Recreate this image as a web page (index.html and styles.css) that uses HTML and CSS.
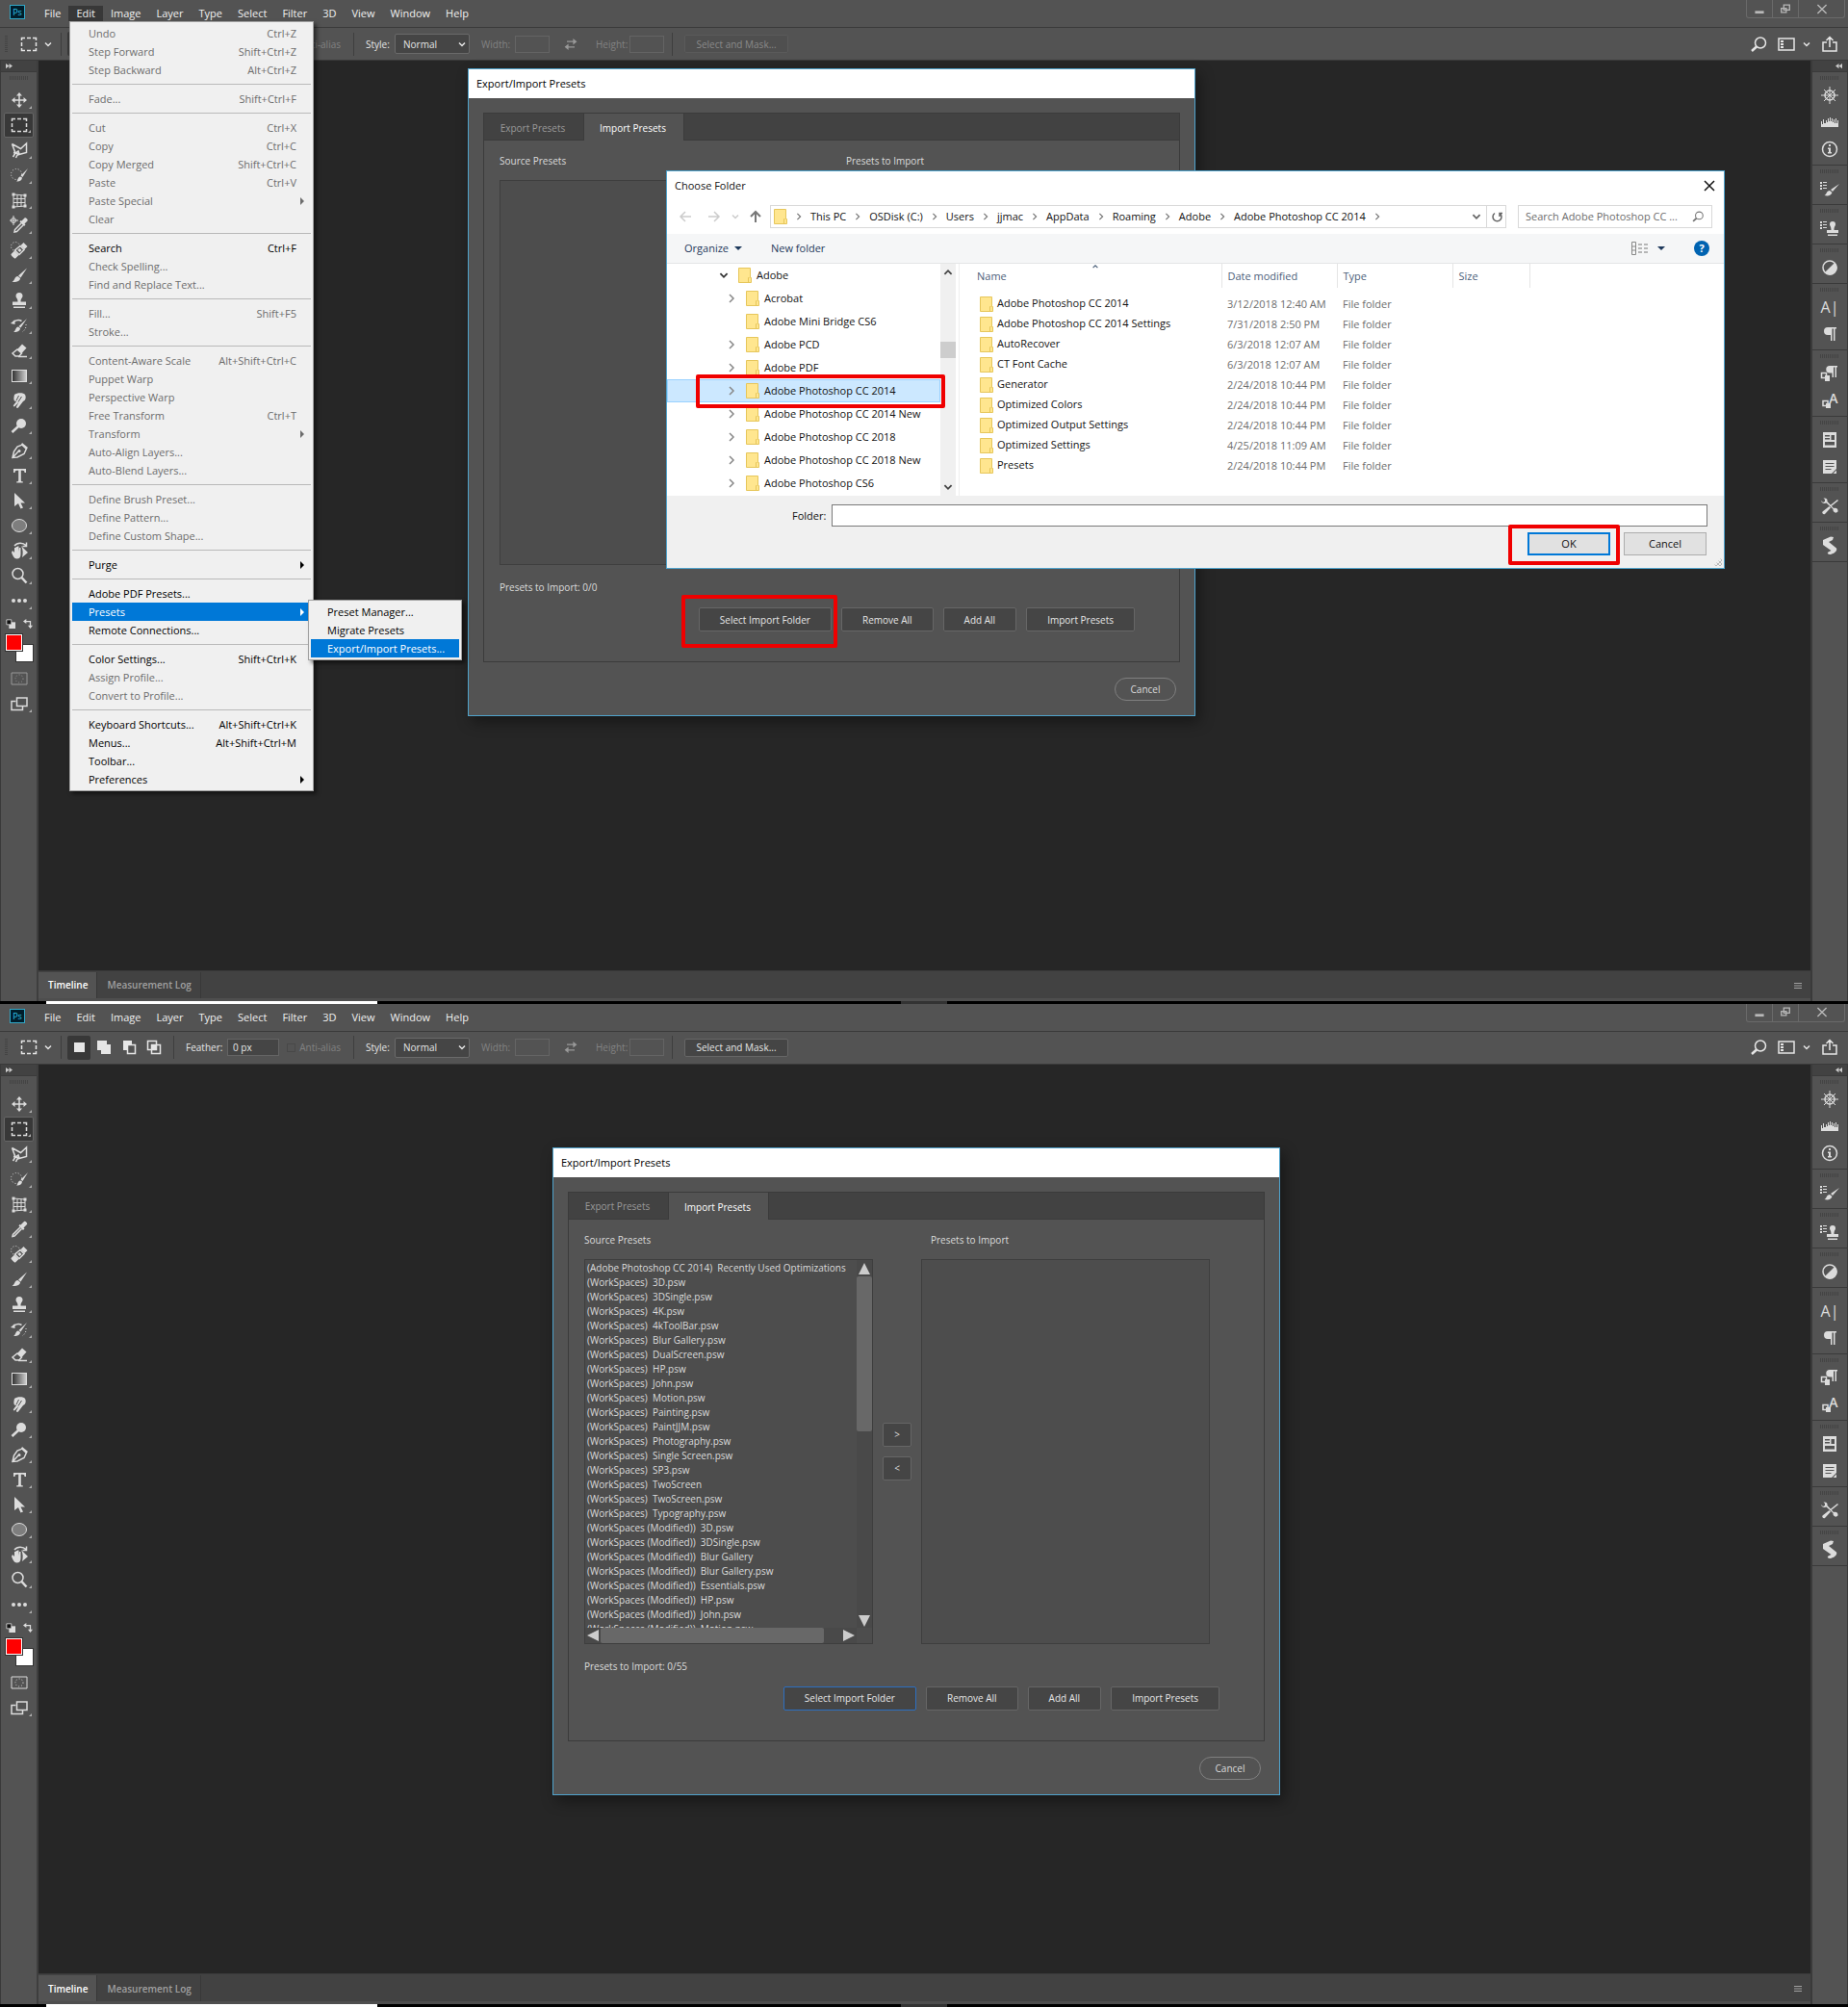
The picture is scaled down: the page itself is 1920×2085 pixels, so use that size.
FILE: index.html
```html
<!DOCTYPE html>
<html lang="en">
<head>
    <meta charset="UTF-8">
    <meta name="viewport" content="width=device-width, initial-scale=1.0">
    <title>Export/Import Presets</title>
    <link rel="stylesheet" href="styles.css">
</head>
<body>
<!-- icons -->
<svg class="sprite" aria-hidden="true">
    <symbol id="move" viewBox="0 0 20 20"><path d="M10 3v14M3 10h14" class="ln"/><path d="M10 2l3 3.500H7zM10 18l3-3.500H7zM2 10l3.500-3v6zM18 10l-3.500-3v6z"/></symbol>
    <symbol id="marquee" viewBox="0 0 20 20"><path d="M2.500 6V3.500H6M8 3.500h4M14 3.500h3.500V6M17.500 8v4M17.500 14v2.500H14M12 16.500H8M6 16.500H2.500V14M2.500 12V8" class="ln"/></symbol>
    <symbol id="lasso" viewBox="0 0 20 20"><path d="M2.500 3.500l9 5L17.500 3v9.500L8 15l-1.500 3M2.500 3.500L6 13l3-2 1 3-6-1.500M6 13l-2.500 4" class="ln"/></symbol>
    <symbol id="quicksel" viewBox="0 0 20 20"><circle cx="7" cy="9" r="5.500" class="ln dots"/><path d="M19 3l-5.500 9-2-1.500zM13 12.500c0 3-3 4.500-6 4 2-1 1.500-5 4-5z"/></symbol>
    <symbol id="crop" viewBox="0 0 20 20"><path d="M4 4l12 1v11L4 17zM8 4.500v12M12 4.500v12M4 8.500h12M4 12.500h12" class="ln thin"/><path d="M2.500 2.500h3v3h-3zM14.500 3.500h3v3h-3zM14.500 14.500h3v3h-3zM2.500 15.500h3v3h-3z"/></symbol>
    <symbol id="eyedrop" viewBox="0 0 20 20"><path d="M11 8l-7.500 7.500-.5 2 2-.5L12.500 9.500" class="ln"/><path d="M9.500 6.500l4.500 4.500 1.500-1.500-1-1 3.500-3.500c1-1-1.500-4-3-3l-3.500 3.500-1-.5z"/></symbol>
    <symbol id="sampler" viewBox="0 0 20 20"><path d="M12 8l-6.500 6.500-.5 2.500 2.500-.5L14 10" class="ln"/><path d="M10.500 6.500l4.500 4.500 1.500-1.500-1-1 3-3c1-1-1.500-4-3-3l-3 3-1-.5z"/><circle cx="4" cy="5" r="2.500" class="ln thin"/><path d="M4 0v10M-1 5h10" class="ln thin"/></symbol>
    <symbol id="heal" viewBox="0 0 20 20"><circle cx="6" cy="6" r="4.500" class="ln dots"/><path d="M14.500 2l4 4-3 3-4-4zM5 10.500l4.500 4.500-3.500 3.500c-1 .5-5-3.500-4.500-4.500z"/><path d="M11 5.500l4 4-5 5-4.500-4.500z" class="ln"/><path d="M10.500 8l2 2-2 2-2-2z"/></symbol>
    <symbol id="brush" viewBox="0 0 20 20"><path d="M18 2.500l-6.500 10-2.500-2zM8.500 11l2.500 2c0 3-4 4.500-8.500 4 3-1.500 2.500-6 6-6z"/></symbol>
    <symbol id="stamp" viewBox="0 0 20 20"><path d="M10 2a3.500 3.500 0 0 1 3.500 3.500c0 2-2 2.500-2 6H17v3.500H3v-3.500h5.500c0-3.500-2-4-2-6A3.500 3.500 0 0 1 10 2zM4 16.500h12V18H4z"/></symbol>
    <symbol id="history" viewBox="0 0 20 20"><path d="M18 3l-6.500 9.500-2-1.500zM9 11.500l2 1.500c0 3-4 4.500-7 4 2.500-1 2-5.500 5-5.500zM1 8l4.500-4v5z"/><path d="M5 6c2-1.500 5-2 7.500-.5" class="ln"/><path d="M17 9c.500 3-1 6-4 8" class="ln dots"/></symbol>
    <symbol id="eraser" viewBox="0 0 20 20"><path d="M13 3.500l4.500 4-5 5.500L8 9z"/><path d="M8 9l4.500 4-2.500 3H6l-3-3z" class="ln"/><path d="M9 16.500h9" class="ln"/></symbol>
    <symbol id="smudge" viewBox="0 0 20 20"><path d="M5 4c3-2.500 10-2 11 0 1.500 3 .500 6-2 7l-5 6.500c-1 1-2.500 0-2-1L9.500 12l-4 4c-1 1-2 0-1.500-1l3.500-4.500C5 11.500 3.500 10 5 4z"/><path d="M9.500 5L7 10M12.500 6L9 11.500" stroke="#535353" fill="none"/></symbol>
    <symbol id="dodge" viewBox="0 0 20 20"><circle cx="12" cy="8" r="5"/><path d="M9 11l-6.500 6" class="ln thick"/></symbol>
    <symbol id="pen" viewBox="0 0 20 20"><path d="M13 4l4.500 4-2.500 5.500-7 3.500L3 17.500 4.500 11 8 6zM3 17.500l6-6.500" class="ln"/><circle cx="10" cy="10.500" r="1.500"/><path d="M13 2l6 5-2 2-5-5z"/></symbol>
    <symbol id="type" viewBox="0 0 20 20"><path d="M4 3h13v4h-1.500c0-1.500-.5-2.200-2-2.200h-1.700V15c0 1 .5 1.300 2 1.300V17.500H7.200v-1.200c1.500 0 2-.3 2-1.300V4.800H7.500c-1.500 0-2 .7-2 2.200H4z"/></symbol>
    <symbol id="select" viewBox="0 0 20 20"><path d="M5 2l11 10.500h-4.500l2.500 5-2.500 1-2.500-5.500L5 16z"/></symbol>
    <symbol id="ellipse" viewBox="0 0 20 20"><ellipse cx="10" cy="10" rx="7.500" ry="6.500" fill="#7e7e7e" stroke="currentColor"/></symbol>
    <symbol id="hand" viewBox="0 0 20 20"><path d="M3 10l2 2V7h1.500v4V6H8v5V5.500h1.500V11l.5-4h1.500v7c0 3-1.500 4.500-4 4.500-3 0-4-3-5.500-6.500zM12 5l7 7-6 5c1-4 1-8-1-12z"/><path d="M5 5c3-4 9-3.500 12-.5M17.500 1.500v4h-4" class="ln"/></symbol>
    <symbol id="zoom" viewBox="0 0 20 20"><circle cx="8.500" cy="8" r="5.500" class="ln"/><path d="M12.500 12l5 5.500" class="ln thick"/></symbol>
    <symbol id="dots" viewBox="0 0 20 20"><circle cx="4" cy="10" r="2"/><circle cx="10" cy="10" r="2"/><circle cx="16" cy="10" r="2"/></symbol>
    <symbol id="defaults" viewBox="0 0 12 12"><path d="M4 4h8v8H4z"/><path d="M1 1h6v6H1z" fill="#111" stroke="currentColor"/></symbol>
    <symbol id="swap" viewBox="0 0 12 12"><path d="M3 3h6v6" class="ln"/><path d="M0 3l4-3v6zM9 12L6 8h6z"/></symbol>
    <symbol id="mask" viewBox="0 0 20 20"><path d="M2 4h16v12H2z" class="ln thin"/><circle cx="10" cy="10" r="4" class="ln dots"/></symbol>
    <symbol id="screens" viewBox="0 0 20 20"><path d="M6.500 7.500H2v9h11.500V13" class="ln"/><path d="M7.500 4H18v8.500H7.500z" class="ln"/></symbol>
    <symbol id="down" viewBox="0 0 10 10"><path d="M2 3.500l3 3 3-3" class="ln"/></symbol>
    <symbol id="m-new" viewBox="0 0 20 20"><path d="M5 5h11v10H5z"/></symbol>
    <symbol id="m-add" viewBox="0 0 20 20"><path d="M3 3h10v4h4v10H7v-4H3z"/></symbol>
    <symbol id="m-sub" viewBox="0 0 20 20"><path d="M4 3h9v4H8v6H4z"/><path d="M8.500 7.500h8v9h-8z" class="ln"/></symbol>
    <symbol id="m-int" viewBox="0 0 20 20"><path d="M3.500 3.500h9v9h-9zM7.500 7.500h9v9h-9z" class="ln"/><path d="M8 8h5v5H8z"/></symbol>
    <symbol id="exchange" viewBox="0 0 20 20"><path d="M5 6.500h10M5 13.500h10" class="ln"/><path d="M13 2.500l5 4-5 4zM7 9.500l-5 4 5 4z"/></symbol>
    <symbol id="search" viewBox="0 0 20 20"><ellipse cx="12" cy="8.500" rx="5.500" ry="5.500" class="ln"/><path d="M8 12.500L3 17" class="ln thick"/></symbol>
    <symbol id="workspace" viewBox="0 0 20 20"><path d="M2 4h16v12H2z" class="ln"/><path d="M4 6h3v2H4zM4 9h3v2H4zM4 12h3v2H4z"/></symbol>
    <symbol id="share" viewBox="0 0 20 20"><path d="M7 8H3v9h14V8h-4M10 13V3M6.500 6L10 2.500 13.500 6" class="ln"/></symbol>
    <symbol id="wheel" viewBox="0 0 20 20"><circle cx="10" cy="10" r="5" class="ln"/><path d="M10 1v18M1 10h18M4 4l12 12M16 4L4 16" class="ln thin"/></symbol>
    <symbol id="histogram" viewBox="0 0 20 20"><path d="M1 15V9h1v3h1V7h1v4h2V8h1v2h1V6h1v3h1V5h1v4h1V6h1v4h1V7h1v4h1V6h1v5h1V8h1v7z"/></symbol>
    <symbol id="info" viewBox="0 0 20 20"><circle cx="10" cy="10" r="7.500" class="ln"/><path d="M9 5h2v2H9zM8 8.500h3V13h1v1.500H8V13h1v-3H8z"/></symbol>
    <symbol id="brushes" viewBox="0 0 20 20"><path d="M0 3h2v2H0zM0 6h2v2H0zM0 9h2v2H0zM3 3h4v1H3zM3 6h4v1H3zM3 9h4v1H3zM20 5l-7 8-2-2zM10 12l2.500 2c-1 3-4 4-8 3 2.500-1 2-5 5.500-5z"/></symbol>
    <symbol id="clone" viewBox="0 0 20 20"><path d="M0 3h2v2H0zM0 6h2v2H0zM0 9h2v2H0zM3 3h4v1H3zM3 6h4v1H3zM3 9h4v1H3zM13 3a3 3 0 0 1 3 3c0 2-1.500 2-1.500 6H19v3H7v-3h4.500c0-4-1.500-4-1.500-6a3 3 0 0 1 3-3zM8 16.500h10V18H8z"/></symbol>
    <symbol id="adjust" viewBox="0 0 20 20"><circle cx="10" cy="10" r="7" class="ln"/><path d="M15.300 4.700A7.500 7.500 0 1 1 4.700 15.300z"/></symbol>
    <symbol id="para" viewBox="0 0 20 20"><path d="M8 3h9v1.500h-1.500V17H14V4.500h-1.500V17H11v-6H8a4 4 0 0 1 0-8z"/></symbol>
    <symbol id="pstyle" viewBox="0 0 20 20"><path d="M10 2h8v1.500h-1V14h-1.500V3.500H14V14h-1.500V9.500H10A3.500 3.500 0 0 1 10 2zM5 12h5v6H5z"/><path d="M1.500 9.500h5v5h-5z" class="ln"/></symbol>
    <symbol id="cstyle" viewBox="0 0 20 20"><path d="M5 13h5v5H5z"/><path d="M2 10.500h5v5H2z" class="ln"/></symbol>
    <symbol id="library" viewBox="0 0 20 20"><path fill-rule="evenodd" d="M3 2h14v16H3zM5 5v1.500h5V5zM5 8v1.500h5V8zM11.500 5v5H15V5zM5 12v3.500h10V12z"/></symbol>
    <symbol id="note" viewBox="0 0 20 20"><path fill-rule="evenodd" d="M3 3h14v9l-5 5H3zM5.500 6v1h9V6zM5.500 9v1h9V9zM5.500 12v1h6v-1z"/><path d="M17 13.500L13.500 17H17z"/></symbol>
    <symbol id="tools" viewBox="0 0 20 20"><path d="M1 4l2 2 2-1 0-2-1.500-1.500c3-.5 4.500 1 4 3.500L14 12c3-1 5 1 4.500 3.500-2 2.500-5.500.5-5-2.500L6.500 6.500C4 7.500 1.500 6.500 1 4zM18 3l1 1-7.500 6-1-1zM9.500 10l1.500 1.500L5 18c-1.500 1-3.500-1-2.500-2.500z"/></symbol>
    <symbol id="script" viewBox="0 0 20 20"><path d="M3 4l8-3.500 3 .5-1 3-4 2 8 6.500c1 2-1 5-6 6.500-3 0-4-1.500-2.500-2.500l3-1.500L3 9z"/></symbol>
    <symbol id="folder" viewBox="0 0 14 16"><path d="M.5.500h12v10h1V15.500H.5z" fill="#ffe68f" stroke="#e6c65b"/><path d="M10.500 15V10.500h1" fill="none" stroke="#e6c65b"/></symbol>
    <symbol id="right" viewBox="0 0 10 10"><path d="M3 1l4 4-4 4" class="ln"/></symbol>
    <symbol id="tri-d" viewBox="0 0 8 8"><path d="M0 2h8L4 6z"/></symbol>
    <symbol id="tri-r" viewBox="0 0 8 8"><path d="M2 0v8l4-4z"/></symbol>
    <symbol id="back" viewBox="0 0 14 14"><path d="M13 7H2M7 2L2 7l5 5" class="ln"/></symbol>
    <symbol id="up" viewBox="0 0 14 14"><path d="M7 13V2M2 7l5-5 5 5" class="ln mid"/></symbol>
    <symbol id="reload" viewBox="0 0 14 14"><path d="M5 3.500a4.500 4.500 0 1 0 5 0M10 7V3.500h3" class="ln"/></symbol>
    <symbol id="views" viewBox="0 0 18 14"><path d="M.5.500h4v13h-4zM.5 5h4M.5 9h4" fill="none" stroke="#888"/><path d="M7 3h4M13 3h4M7 7h4M13 7h4M7 11h4M13 11h4" stroke="#777"/></symbol>
    <symbol id="close" viewBox="0 0 12 12"><path d="M1 1l10 10M11 1L1 11" class="ln"/></symbol>
    <symbol id="restore" viewBox="0 0 14 12"><path d="M5 1h7v6H5z" class="ln"/><path d="M2 5h6v5H2z" class="ln"/></symbol>
    <symbol id="minus" viewBox="0 0 12 12"><path d="M1 8h10v3H1z"/></symbol>
    <symbol id="burger" viewBox="0 0 10 10"><path d="M1 2.500h8M1 5h8M1 7.500h8" class="ln thin"/></symbol>
    <symbol id="dbl" viewBox="0 0 10 8"><path d="M1 1l4 3-4 3zM5 1l4 3-4 3z"/></symbol>
</svg>

<section class="screen">
    <header class="menubar">
        <span class="logo">Ps</span>
        <nav class="menus">
            <button>File</button><button class="open">Edit</button><button>Image</button><button>Layer</button><button>Type</button><button>Select</button><button>Filter</button><button>3D</button><button>View</button><button>Window</button><button>Help</button>
        </nav>
        <div class="winctl">
            <button title="Minimize"><svg><use href="#minus"/></svg></button><button title="Restore"><svg><use href="#restore"/></svg></button><button title="Close"><svg><use href="#close"/></svg></button>
        </div>
    </header>
    <div class="options">
        <i class="grip"></i>
        <button class="cur" title="Marquee"><svg class="ic"><use href="#marquee"/></svg><svg class="chev"><use href="#down"/></svg></button>
        <i class="sep"></i>
        <div class="modes">
            <button class="on" title="New"><svg class="ic"><use href="#m-new"/></svg></button><button title="Add"><svg class="ic"><use href="#m-add"/></svg></button><button title="Subtract"><svg class="ic"><use href="#m-sub"/></svg></button><button title="Intersect"><svg class="ic"><use href="#m-int"/></svg></button>
        </div>
        <i class="sep"></i>
        <div class="field feather"><label for="feather1">Feather:</label><input id="feather1" type="text" value="0 px"></div>
        <div class="field alias off"><input id="alias1" type="checkbox" disabled><label for="alias1">Anti-alias</label></div>
        <i class="sep"></i>
        <div class="field style"><label for="style1">Style:</label><span class="drop"><select id="style1"><option>Normal</option></select><svg class="chev"><use href="#down"/></svg></span></div>
        <div class="field size off"><label for="w1">Width:</label><input id="w1" type="text" disabled></div>
        <svg class="exch"><use href="#exchange"/></svg>
        <div class="field size off"><label for="h1">Height:</label><input id="h1" type="text" disabled></div>
        <i class="sep"></i>
        <button class="btn mask" disabled>Select and Mask...</button>
        <div class="right">
            <button title="Search"><svg class="ic"><use href="#search"/></svg></button>
            <button title="Workspace"><svg class="ic"><use href="#workspace"/></svg><svg class="chev"><use href="#down"/></svg></button>
            <button title="Share"><svg class="ic"><use href="#share"/></svg></button>
        </div>
    </div>
    <div class="main">
        <aside class="toolbox">
            <div class="bar"><svg><use href="#dbl"/></svg></div>
            <i class="hgrip"></i>
            <button title="Move"><svg class="ic"><use href="#move"/></svg></button>
            <button title="Marquee" class="on"><svg class="ic"><use href="#marquee"/></svg></button>
            <button title="Lasso"><svg class="ic"><use href="#lasso"/></svg></button>
            <button title="Quick Selection"><svg class="ic"><use href="#quicksel"/></svg></button>
            <button title="Perspective Crop"><svg class="ic"><use href="#crop"/></svg></button>
            <button title="Color Sampler"><svg class="ic"><use href="#sampler"/></svg></button>
            <button title="Healing Brush"><svg class="ic"><use href="#heal"/></svg></button>
            <button title="Brush"><svg class="ic"><use href="#brush"/></svg></button>
            <button title="Clone Stamp"><svg class="ic"><use href="#stamp"/></svg></button>
            <button title="History Brush"><svg class="ic"><use href="#history"/></svg></button>
            <button title="Eraser"><svg class="ic"><use href="#eraser"/></svg></button>
            <button title="Gradient"><span class="gradient"></span></button>
            <button title="Smudge"><svg class="ic"><use href="#smudge"/></svg></button>
            <button title="Dodge"><svg class="ic"><use href="#dodge"/></svg></button>
            <button title="Pen"><svg class="ic"><use href="#pen"/></svg></button>
            <button title="Type"><svg class="ic"><use href="#type"/></svg></button>
            <button title="Path Selection"><svg class="ic"><use href="#select"/></svg></button>
            <button title="Ellipse"><svg class="ic"><use href="#ellipse"/></svg></button>
            <button title="Rotate View"><svg class="ic"><use href="#hand"/></svg></button>
            <button title="Zoom"><svg class="ic"><use href="#zoom"/></svg></button>
            <button title="Edit Toolbar"><svg class="ic"><use href="#dots"/></svg></button>
            <div class="mini"><svg><use href="#defaults"/></svg><svg><use href="#swap"/></svg></div>
            <div class="colors"><span class="back"></span><span class="fore"></span></div>
            <button title="Quick Mask" class="plain dim"><svg class="ic"><use href="#mask"/></svg></button>
            <button title="Screen Mode"><svg class="ic"><use href="#screens"/></svg></button>
        </aside>
        <div class="work">
            <div class="canvas"></div>
            <div class="timeline"><button class="on">Timeline</button><button>Measurement Log</button><svg><use href="#burger"/></svg></div>
        </div>
        <aside class="panels">
            <div class="bar"><svg><use href="#dbl"/></svg></div>
            <div class="group"><i class="hgrip"></i><button title="Navigator"><svg class="ic"><use href="#wheel"/></svg></button><button title="Histogram"><svg class="ic"><use href="#histogram"/></svg></button><button title="Info"><svg class="ic"><use href="#info"/></svg></button></div>
            <div class="group"><i class="hgrip"></i><button title="Brushes"><svg class="ic"><use href="#brushes"/></svg></button></div>
            <div class="group"><i class="hgrip"></i><button title="Clone Source"><svg class="ic"><use href="#clone"/></svg></button></div>
            <div class="group"><i class="hgrip"></i><button title="Adjustments"><svg class="ic"><use href="#adjust"/></svg></button></div>
            <div class="group"><i class="hgrip"></i><button title="Character" class="char">A|</button><button title="Paragraph"><svg class="ic"><use href="#para"/></svg></button></div>
            <div class="group"><i class="hgrip"></i><button title="Paragraph Styles"><svg class="ic"><use href="#pstyle"/></svg></button><button title="Character Styles" class="chars"><svg class="ic"><use href="#cstyle"/></svg><b>A</b></button></div>
            <div class="group"><i class="hgrip"></i><button title="Libraries"><svg class="ic"><use href="#library"/></svg></button><button title="Notes"><svg class="ic"><use href="#note"/></svg></button></div>
            <div class="group"><i class="hgrip"></i><button title="Tool Presets"><svg class="ic"><use href="#tools"/></svg></button></div>
            <div class="group"><i class="hgrip"></i><button title="Scripts"><svg class="ic"><use href="#script"/></svg></button></div>
        </aside>
    </div>
    <div class="taskbar"><i></i></div>

    <div class="dialog first">
        <h2>Export/Import Presets</h2>
        <div class="sheet">
            <div class="tabs"><button>Export Presets</button><button class="on">Import Presets</button></div>
            <div class="lists">
                <div class="col"><p>Source Presets</p><ul class="list"></ul></div>
                <div class="move"></div>
                <div class="col"><p>Presets to Import</p><ul class="list"></ul></div>
            </div>
            <p class="count">Presets to Import: 0/0</p>
            <div class="actions">
                <span class="marked folder-mark"><button class="btn">Select Import Folder</button></span>
                <button class="btn">Remove All</button>
                <button class="btn">Add All</button>
                <button class="btn">Import Presets</button>
            </div>
        </div>
        <button class="pill">Cancel</button>
    </div>

    <div class="chooser">
        <div class="ctitle"><h2>Choose Folder</h2><button title="Close"><svg><use href="#close"/></svg></button></div>
        <div class="cnav">
            <button title="Back" class="faint"><svg><use href="#back"/></svg></button>
            <button title="Forward" class="faint flip"><svg><use href="#back"/></svg></button>
            <button title="Recent" class="faint small"><svg><use href="#down"/></svg></button>
            <button title="Up"><svg><use href="#up"/></svg></button>
            <div class="address">
                <svg class="fold"><use href="#folder"/></svg><svg class="gt"><use href="#right"/></svg>
                <a href="#">This PC</a><svg class="gt"><use href="#right"/></svg>
                <a href="#">OSDisk (C:)</a><svg class="gt"><use href="#right"/></svg>
                <a href="#">Users</a><svg class="gt"><use href="#right"/></svg>
                <a href="#">jjmac</a><svg class="gt"><use href="#right"/></svg>
                <a href="#">AppData</a><svg class="gt"><use href="#right"/></svg>
                <a href="#">Roaming</a><svg class="gt"><use href="#right"/></svg>
                <a href="#">Adobe</a><svg class="gt"><use href="#right"/></svg>
                <a href="#">Adobe Photoshop CC 2014</a><svg class="gt"><use href="#right"/></svg>
                <button title="History" class="hist"><svg><use href="#down"/></svg></button>
                <button title="Refresh" class="refresh"><svg><use href="#reload"/></svg></button>
            </div>
            <div class="find"><input type="text" placeholder="Search Adobe Photoshop CC ..." aria-label="Search"><svg><use href="#search"/></svg></div>
        </div>
        <div class="ctools">
            <button>Organize <svg><use href="#tri-d"/></svg></button>
            <button>New folder</button>
            <button title="Views" class="view"><svg class="views"><use href="#views"/></svg><svg><use href="#tri-d"/></svg></button>
            <button title="Help" class="help">?</button>
        </div>
        <div class="cbody">
            <div class="treewrap">
                <ul class="tree">
                    <li class="root"><svg class="tw"><use href="#down"/></svg><svg class="fold"><use href="#folder"/></svg>Adobe</li>
                    <li><svg class="tw"><use href="#right"/></svg><svg class="fold"><use href="#folder"/></svg>Acrobat</li>
                    <li><svg class="tw"></svg><svg class="fold"><use href="#folder"/></svg>Adobe Mini Bridge CS6</li>
                    <li><svg class="tw"><use href="#right"/></svg><svg class="fold"><use href="#folder"/></svg>Adobe PCD</li>
                    <li><svg class="tw"><use href="#right"/></svg><svg class="fold"><use href="#folder"/></svg>Adobe PDF</li>
                    <li class="sel marked"><svg class="tw"><use href="#right"/></svg><svg class="fold"><use href="#folder"/></svg>Adobe Photoshop CC 2014</li>
                    <li><svg class="tw"><use href="#right"/></svg><svg class="fold"><use href="#folder"/></svg>Adobe Photoshop CC 2014 New</li>
                    <li><svg class="tw"><use href="#right"/></svg><svg class="fold"><use href="#folder"/></svg>Adobe Photoshop CC 2018</li>
                    <li><svg class="tw"><use href="#right"/></svg><svg class="fold"><use href="#folder"/></svg>Adobe Photoshop CC 2018 New</li>
                    <li><svg class="tw"><use href="#right"/></svg><svg class="fold"><use href="#folder"/></svg>Adobe Photoshop CS6</li>
                </ul>
                <div class="tscroll"><svg class="rot"><use href="#down"/></svg><i></i><svg><use href="#down"/></svg></div>
            </div>
            <div class="files">
                <table>
                    <thead><tr><th class="c-name">Name<svg class="sort"><use href="#down"/></svg></th><th class="c-date">Date modified</th><th class="c-type">Type</th><th class="c-size">Size</th><th></th></tr></thead>
                    <tbody>
                        <tr><td><svg class="fold"><use href="#folder"/></svg>Adobe Photoshop CC 2014</td><td>3/12/2018 12:40 AM</td><td>File folder</td><td></td><td></td></tr>
                        <tr><td><svg class="fold"><use href="#folder"/></svg>Adobe Photoshop CC 2014 Settings</td><td>7/31/2018 2:50 PM</td><td>File folder</td><td></td><td></td></tr>
                        <tr><td><svg class="fold"><use href="#folder"/></svg>AutoRecover</td><td>6/3/2018 12:07 AM</td><td>File folder</td><td></td><td></td></tr>
                        <tr><td><svg class="fold"><use href="#folder"/></svg>CT Font Cache</td><td>6/3/2018 12:07 AM</td><td>File folder</td><td></td><td></td></tr>
                        <tr><td><svg class="fold"><use href="#folder"/></svg>Generator</td><td>2/24/2018 10:44 PM</td><td>File folder</td><td></td><td></td></tr>
                        <tr><td><svg class="fold"><use href="#folder"/></svg>Optimized Colors</td><td>2/24/2018 10:44 PM</td><td>File folder</td><td></td><td></td></tr>
                        <tr><td><svg class="fold"><use href="#folder"/></svg>Optimized Output Settings</td><td>2/24/2018 10:44 PM</td><td>File folder</td><td></td><td></td></tr>
                        <tr><td><svg class="fold"><use href="#folder"/></svg>Optimized Settings</td><td>4/25/2018 11:09 AM</td><td>File folder</td><td></td><td></td></tr>
                        <tr><td><svg class="fold"><use href="#folder"/></svg>Presets</td><td>2/24/2018 10:44 PM</td><td>File folder</td><td></td><td></td></tr>
                    </tbody>
                </table>
            </div>
        </div>
        <div class="cfoot">
            <div class="frow"><label for="folder-name">Folder:</label><input id="folder-name" type="text"></div>
            <div class="fbtns"><span class="marked ok-mark"><button class="ok">OK</button></span><button>Cancel</button></div>
            <i class="resize"></i>
        </div>
    </div>

    <div class="menu edit">
        <button disabled>Undo<kbd>Ctrl+Z</kbd></button>
        <button disabled>Step Forward<kbd>Shift+Ctrl+Z</kbd></button>
        <button disabled>Step Backward<kbd>Alt+Ctrl+Z</kbd></button>
        <hr>
        <button disabled>Fade...<kbd>Shift+Ctrl+F</kbd></button>
        <hr>
        <button disabled>Cut<kbd>Ctrl+X</kbd></button>
        <button disabled>Copy<kbd>Ctrl+C</kbd></button>
        <button disabled>Copy Merged<kbd>Shift+Ctrl+C</kbd></button>
        <button disabled>Paste<kbd>Ctrl+V</kbd></button>
        <button disabled>Paste Special<svg><use href="#tri-r"/></svg></button>
        <button disabled>Clear</button>
        <hr>
        <button>Search<kbd>Ctrl+F</kbd></button>
        <button disabled>Check Spelling...</button>
        <button disabled>Find and Replace Text...</button>
        <hr>
        <button disabled>Fill...<kbd>Shift+F5</kbd></button>
        <button disabled>Stroke...</button>
        <hr>
        <button disabled>Content-Aware Scale<kbd>Alt+Shift+Ctrl+C</kbd></button>
        <button disabled>Puppet Warp</button>
        <button disabled>Perspective Warp</button>
        <button disabled>Free Transform<kbd>Ctrl+T</kbd></button>
        <button disabled>Transform<svg><use href="#tri-r"/></svg></button>
        <button disabled>Auto-Align Layers...</button>
        <button disabled>Auto-Blend Layers...</button>
        <hr>
        <button disabled>Define Brush Preset...</button>
        <button disabled>Define Pattern...</button>
        <button disabled>Define Custom Shape...</button>
        <hr>
        <button>Purge<svg><use href="#tri-r"/></svg></button>
        <hr>
        <button>Adobe PDF Presets...</button>
        <button class="on">Presets<svg><use href="#tri-r"/></svg></button>
        <button>Remote Connections...</button>
        <hr>
        <button>Color Settings...<kbd>Shift+Ctrl+K</kbd></button>
        <button disabled>Assign Profile...</button>
        <button disabled>Convert to Profile...</button>
        <hr>
        <button>Keyboard Shortcuts...<kbd>Alt+Shift+Ctrl+K</kbd></button>
        <button>Menus...<kbd>Alt+Shift+Ctrl+M</kbd></button>
        <button>Toolbar...</button>
        <button>Preferences<svg><use href="#tri-r"/></svg></button>
    </div>
    <div class="menu sub">
        <button>Preset Manager...</button>
        <button>Migrate Presets</button>
        <button class="on">Export/Import Presets...</button>
    </div>
</section>

<section class="screen">
    <header class="menubar">
        <span class="logo">Ps</span>
        <nav class="menus">
            <button>File</button><button>Edit</button><button>Image</button><button>Layer</button><button>Type</button><button>Select</button><button>Filter</button><button>3D</button><button>View</button><button>Window</button><button>Help</button>
        </nav>
        <div class="winctl">
            <button title="Minimize"><svg><use href="#minus"/></svg></button><button title="Restore"><svg><use href="#restore"/></svg></button><button title="Close"><svg><use href="#close"/></svg></button>
        </div>
    </header>
    <div class="options">
        <i class="grip"></i>
        <button class="cur" title="Marquee"><svg class="ic"><use href="#marquee"/></svg><svg class="chev"><use href="#down"/></svg></button>
        <i class="sep"></i>
        <div class="modes">
            <button class="on" title="New"><svg class="ic"><use href="#m-new"/></svg></button><button title="Add"><svg class="ic"><use href="#m-add"/></svg></button><button title="Subtract"><svg class="ic"><use href="#m-sub"/></svg></button><button title="Intersect"><svg class="ic"><use href="#m-int"/></svg></button>
        </div>
        <i class="sep"></i>
        <div class="field feather"><label for="feather2">Feather:</label><input id="feather2" type="text" value="0 px"></div>
        <div class="field alias off"><input id="alias2" type="checkbox" disabled><label for="alias2">Anti-alias</label></div>
        <i class="sep"></i>
        <div class="field style"><label for="style2">Style:</label><span class="drop"><select id="style2"><option>Normal</option></select><svg class="chev"><use href="#down"/></svg></span></div>
        <div class="field size off"><label for="w2">Width:</label><input id="w2" type="text" disabled></div>
        <svg class="exch"><use href="#exchange"/></svg>
        <div class="field size off"><label for="h2">Height:</label><input id="h2" type="text" disabled></div>
        <i class="sep"></i>
        <button class="btn mask">Select and Mask...</button>
        <div class="right">
            <button title="Search"><svg class="ic"><use href="#search"/></svg></button>
            <button title="Workspace"><svg class="ic"><use href="#workspace"/></svg><svg class="chev"><use href="#down"/></svg></button>
            <button title="Share"><svg class="ic"><use href="#share"/></svg></button>
        </div>
    </div>
    <div class="main">
        <aside class="toolbox">
            <div class="bar"><svg><use href="#dbl"/></svg></div>
            <i class="hgrip"></i>
            <button title="Move"><svg class="ic"><use href="#move"/></svg></button>
            <button title="Marquee" class="on"><svg class="ic"><use href="#marquee"/></svg></button>
            <button title="Lasso"><svg class="ic"><use href="#lasso"/></svg></button>
            <button title="Quick Selection"><svg class="ic"><use href="#quicksel"/></svg></button>
            <button title="Perspective Crop"><svg class="ic"><use href="#crop"/></svg></button>
            <button title="Eyedropper"><svg class="ic"><use href="#eyedrop"/></svg></button>
            <button title="Healing Brush"><svg class="ic"><use href="#heal"/></svg></button>
            <button title="Brush"><svg class="ic"><use href="#brush"/></svg></button>
            <button title="Clone Stamp"><svg class="ic"><use href="#stamp"/></svg></button>
            <button title="History Brush"><svg class="ic"><use href="#history"/></svg></button>
            <button title="Eraser"><svg class="ic"><use href="#eraser"/></svg></button>
            <button title="Gradient"><span class="gradient"></span></button>
            <button title="Smudge"><svg class="ic"><use href="#smudge"/></svg></button>
            <button title="Dodge"><svg class="ic"><use href="#dodge"/></svg></button>
            <button title="Pen"><svg class="ic"><use href="#pen"/></svg></button>
            <button title="Type"><svg class="ic"><use href="#type"/></svg></button>
            <button title="Path Selection"><svg class="ic"><use href="#select"/></svg></button>
            <button title="Ellipse"><svg class="ic"><use href="#ellipse"/></svg></button>
            <button title="Rotate View"><svg class="ic"><use href="#hand"/></svg></button>
            <button title="Zoom"><svg class="ic"><use href="#zoom"/></svg></button>
            <button title="Edit Toolbar"><svg class="ic"><use href="#dots"/></svg></button>
            <div class="mini"><svg><use href="#defaults"/></svg><svg><use href="#swap"/></svg></div>
            <div class="colors"><span class="back"></span><span class="fore"></span></div>
            <button title="Quick Mask" class="plain"><svg class="ic"><use href="#mask"/></svg></button>
            <button title="Screen Mode"><svg class="ic"><use href="#screens"/></svg></button>
        </aside>
        <div class="work">
            <div class="canvas"></div>
            <div class="timeline"><button class="on">Timeline</button><button>Measurement Log</button><svg><use href="#burger"/></svg></div>
        </div>
        <aside class="panels">
            <div class="bar"><svg><use href="#dbl"/></svg></div>
            <div class="group"><i class="hgrip"></i><button title="Navigator"><svg class="ic"><use href="#wheel"/></svg></button><button title="Histogram"><svg class="ic"><use href="#histogram"/></svg></button><button title="Info"><svg class="ic"><use href="#info"/></svg></button></div>
            <div class="group"><i class="hgrip"></i><button title="Brushes"><svg class="ic"><use href="#brushes"/></svg></button></div>
            <div class="group"><i class="hgrip"></i><button title="Clone Source"><svg class="ic"><use href="#clone"/></svg></button></div>
            <div class="group"><i class="hgrip"></i><button title="Adjustments"><svg class="ic"><use href="#adjust"/></svg></button></div>
            <div class="group"><i class="hgrip"></i><button title="Character" class="char">A|</button><button title="Paragraph"><svg class="ic"><use href="#para"/></svg></button></div>
            <div class="group"><i class="hgrip"></i><button title="Paragraph Styles"><svg class="ic"><use href="#pstyle"/></svg></button><button title="Character Styles" class="chars"><svg class="ic"><use href="#cstyle"/></svg><b>A</b></button></div>
            <div class="group"><i class="hgrip"></i><button title="Libraries"><svg class="ic"><use href="#library"/></svg></button><button title="Notes"><svg class="ic"><use href="#note"/></svg></button></div>
            <div class="group"><i class="hgrip"></i><button title="Tool Presets"><svg class="ic"><use href="#tools"/></svg></button></div>
            <div class="group"><i class="hgrip"></i><button title="Scripts"><svg class="ic"><use href="#script"/></svg></button></div>
        </aside>
    </div>
    <div class="taskbar"><i></i></div>

    <div class="dialog second">
        <h2>Export/Import Presets</h2>
        <div class="sheet">
            <div class="tabs"><button>Export Presets</button><button class="on">Import Presets</button></div>
            <div class="lists">
                <div class="col"><p>Source Presets</p>
                    <div class="list full">
                        <ul>
                            <li>(Adobe Photoshop CC 2014)  Recently Used Optimizations</li>
                            <li>(WorkSpaces)  3D.psw</li>
                            <li>(WorkSpaces)  3DSingle.psw</li>
                            <li>(WorkSpaces)  4K.psw</li>
                            <li>(WorkSpaces)  4kToolBar.psw</li>
                            <li>(WorkSpaces)  Blur Gallery.psw</li>
                            <li>(WorkSpaces)  DualScreen.psw</li>
                            <li>(WorkSpaces)  HP.psw</li>
                            <li>(WorkSpaces)  John.psw</li>
                            <li>(WorkSpaces)  Motion.psw</li>
                            <li>(WorkSpaces)  Painting.psw</li>
                            <li>(WorkSpaces)  PaintJJM.psw</li>
                            <li>(WorkSpaces)  Photography.psw</li>
                            <li>(WorkSpaces)  Single Screen.psw</li>
                            <li>(WorkSpaces)  SP3.psw</li>
                            <li>(WorkSpaces)  TwoScreen</li>
                            <li>(WorkSpaces)  TwoScreen.psw</li>
                            <li>(WorkSpaces)  Typography.psw</li>
                            <li>(WorkSpaces (Modified))  3D.psw</li>
                            <li>(WorkSpaces (Modified))  3DSingle.psw</li>
                            <li>(WorkSpaces (Modified))  Blur Gallery</li>
                            <li>(WorkSpaces (Modified))  Blur Gallery.psw</li>
                            <li>(WorkSpaces (Modified))  Essentials.psw</li>
                            <li>(WorkSpaces (Modified))  HP.psw</li>
                            <li>(WorkSpaces (Modified))  John.psw</li>
                            <li>(WorkSpaces (Modified))  Motion.psw</li>
                        </ul>
                        <div class="vbar"><i class="t-up"></i><span></span><i class="t-down"></i></div>
                        <div class="hbar"><i class="t-left"></i><span></span><i class="t-right"></i></div>
                    </div>
                </div>
                <div class="move"><button class="btn">&gt;</button><button class="btn">&lt;</button></div>
                <div class="col"><p>Presets to Import</p><ul class="list"></ul></div>
            </div>
            <p class="count">Presets to Import: 0/55</p>
            <div class="actions">
                <button class="btn focus">Select Import Folder</button>
                <button class="btn">Remove All</button>
                <button class="btn">Add All</button>
                <button class="btn">Import Presets</button>
            </div>
        </div>
        <button class="pill">Cancel</button>
    </div>
</section>
</body>
</html>
```
FILE: styles.css
```css
*{
    margin: 0;
    padding: 0;
    box-sizing: border-box;
}
body{
    font: 11px/16px "Open Sans", "Noto Sans", sans-serif;
    background: #262626;
    color: #e6e6e6;
}
button,input,select{
    font: inherit;
    color: inherit;
    background: none;
    border: 0;
    outline: 0;
}
button{
    white-space: nowrap;
}
ul{
    list-style: none;
}
a{
    color: inherit;
    text-decoration: none;
}
h2{
    font-size: 11px;
    font-weight: normal;
}
svg{
    display: block;
    flex: none;
    fill: currentColor;
}
.sprite{
    position: absolute;
    width: 0;
    height: 0;
}
.ln{
    fill: none;
    stroke: currentColor;
    stroke-width: 1.5;
}
.thin{
    stroke-width: 1;
}
.mid{
    stroke-width: 2;
}
.thick{
    stroke-width: 2.5;
}
.dots{
    stroke-width: 1;
    stroke-dasharray: 1 2;
}
.ic{
    width: 20px;
    height: 20px;
}
.chev{
    width: 10px;
    height: 10px;
}
.chev .ln{
    stroke-width: 1;
}
.screen{
    position: relative;
    display: flex;
    flex-direction: column;
    height: 50vh;
    min-height: 900px;
    overflow: hidden;
}

/* menu bar */
.menubar{
    display: flex;
    height: 28px;
    padding-left: 10px;
    background: #535353;
    color: #f0f0f0;
}
.logo{
    width: 16px;
    height: 15px;
    margin: 5px 12px 0 0;
    border: 1px solid #31a8c8;
    background: #001d2b;
    color: #31c5f0;
    font-size: 9px;
    line-height: 13px;
    text-align: center;
}
.menus{
    display: flex;
    align-items: flex-end;
    padding-bottom: 6px;
}
.menus button{
    padding: 0 8px;
    height: 16px;
    line-height: 14px;
}
.menus .open{
    background: #383838;
}
.winctl{
    display: flex;
    height: 19px;
    margin: 0 3px 0 auto;
    border: 1px solid #6a6a6a;
    border-top: 0;
    border-radius: 0 0 3px 3px;
    color: #b8b8b8;
}
.winctl button{
    display: flex;
    align-items: center;
    justify-content: center;
    width: 27px;
    border-right: 1px solid #6a6a6a;
}
.winctl button:last-child{
    width: 47px;
    border: 0;
}
.winctl svg{
    width: 12px;
    height: 11px;
}

/* options bar */
.options{
    display: flex;
    align-items: center;
    height: 35px;
    padding-left: 5px;
    background: #535353;
    border-top: 1px solid #3a3a3a;
    border-bottom: 1px solid #3a3a3a;
    font-size: 10px;
}
.grip{
    width: 3px;
    height: 18px;
    margin-right: 12px;
    background: repeating-linear-gradient(#444 0 1px, #535353 1px 2px);
}
.cur{
    display: flex;
    align-items: center;
    gap: 5px;
}
.sep{
    width: 1px;
    height: 24px;
    margin-left: 8px;
    background: #3e3e3e;
}
.modes{
    display: flex;
    gap: 2px;
    margin-left: 6px;
}
.modes button{
    display: flex;
    align-items: center;
    justify-content: center;
    width: 24px;
    height: 25px;
    border-radius: 2px;
}
.modes .on{
    background: #383838;
}
.field{
    display: flex;
    align-items: center;
    justify-content: space-between;
    margin-left: 12px;
}
.field input[type=text]{
    width: 36px;
    height: 18px;
    border: 1px solid #646464;
}
.off{
    color: #828282;
}
.feather{
    width: 97px;
}
.field.feather input{
    width: 54px;
    padding-left: 5px;
    background: #454545;
}
.alias{
    width: 56px;
    margin: 0 5px 0 8px;
}
.alias input{
    appearance: none;
    width: 9px;
    height: 9px;
    border: 1px solid #484848;
}
.style{
    width: 108px;
}
.drop{
    display: grid;
    width: 78px;
}
.drop select{
    grid-area: 1/1;
    appearance: none;
    height: 21px;
    padding-left: 8px;
    border: 1px solid #6a6a6a;
    border-radius: 2px;
    background: #454545;
}
.drop .chev{
    grid-area: 1/1;
    place-self: center end;
    margin-right: 3px;
}
.size{
    width: 71px;
}
.exch{
    width: 16px;
    height: 16px;
    margin: 0 8px 0 14px;
    color: #999;
}
.exch + .size{
    margin-left: 10px;
}
.btn{
    height: 25px;
    border: 1px solid #666;
    border-radius: 2px;
    background: #454545;
}
.btn.focus{
    border-color: #2d6fc0;
}
.mask{
    width: 108px;
    height: 19px;
    margin-left: 12px;
}
.mask:disabled{
    background: #4f4f4f;
    border-color: #5a5a5a;
    color: #8a8a8a;
}
.right{
    display: flex;
    gap: 9px;
    margin: 0 9px 0 auto;
}
.right button{
    display: flex;
    align-items: center;
    gap: 6px;
}

/* workspace */
.main{
    display: flex;
    flex: 1;
    min-height: 0;
}
.toolbox{
    display: flex;
    flex-direction: column;
    align-items: center;
    width: 40px;
    background: #535353;
    border-left: 1px solid #3a3a3a;
    border-right: 2px solid #3e3e3e;
}
.bar{
    align-self: stretch;
    height: 12px;
    padding: 2px 4px;
    background: #424242;
    border-bottom: 1px solid #3a3a3a;
}
.bar svg{
    width: 9px;
    height: 7px;
    color: #ccc;
}
.hgrip{
    display: block;
    width: 20px;
    height: 4px;
    margin-top: 4px;
    background: repeating-linear-gradient(90deg, #444 0 1px, #535353 1px 2px);
}
.toolbox .hgrip{
    margin-bottom: 8px;
}
.toolbox button{
    position: relative;
    display: flex;
    flex: none;
    align-items: center;
    justify-content: center;
    width: 31px;
    height: 26px;
    color: #dcdcdc;
}
.toolbox .on{
    background: #383838;
    border: 1px solid #666;
    border-radius: 2px;
}
.toolbox button::after{
    content: "";
    position: absolute;
    right: 2px;
    bottom: 4px;
    border-left: 3px solid transparent;
    border-bottom: 3px solid #b0b0b0;
}
.toolbox .plain::after{
    display: none;
}
.toolbox .dim{
    color: #999;
}
.gradient{
    width: 16px;
    height: 13px;
    border: 1px solid #ddd;
    background: linear-gradient(90deg, #333, #ccc);
}
.mini{
    display: flex;
    justify-content: space-between;
    width: 28px;
    margin: 6px 0 5px;
}
.mini svg{
    width: 10px;
    height: 10px;
    color: #ddd;
}
.colors{
    display: grid;
    width: 30px;
    height: 30px;
    margin-bottom: 4px;
}
.colors span{
    grid-area: 1/1;
    width: 19px;
    height: 19px;
    border: 1px solid #333;
}
.fore{
    background: red;
    box-shadow: inset 0 0 0 1px #fff;
}
.back{
    place-self: end;
    background: #fff;
}
.work{
    display: flex;
    flex: 1;
    flex-direction: column;
}
.canvas{
    flex: 1;
    background: #262626;
}
.timeline{
    display: flex;
    height: 32px;
    padding-top: 1px;
    background: #424242;
    border-top: 1px solid #3a3a3a;
    border-bottom: 3px solid #4e4e4e;
    font-size: 10px;
    font-weight: 600;
    color: #a0a0a0;
}
.timeline button{
    padding: 0 9px 0 10px;
    border-right: 1px solid #383838;
}
.timeline .on{
    background: #535353;
    color: #fff;
}
.timeline svg{
    width: 10px;
    height: 10px;
    margin: 9px 8px 0 auto;
}
.panels{
    width: 39px;
    background: #535353;
    border-left: 2px solid #3a3a3a;
    border-right: 1px solid #3a3a3a;
}
.panels .bar svg{
    margin-left: auto;
    transform: rotate(180deg);
}
.group{
    display: flex;
    flex-direction: column;
    align-items: center;
    padding-bottom: 2px;
    border-bottom: 1px solid #3a3a3a;
}
.group .hgrip{
    margin-bottom: 2px;
}
.group button{
    display: flex;
    align-items: center;
    justify-content: center;
    height: 28px;
    color: #dcdcdc;
}
.group .char{
    font-size: 16px;
}
.group .chars b{
    margin-left: -12px;
    padding-bottom: 4px;
    font-size: 14px;
    font-weight: 600;
}
.taskbar{
    height: 3px;
    padding-left: 48px;
    background: linear-gradient(#333, #333) 50% 0/48px 3px no-repeat #000;
}
.taskbar i{
    display: block;
    width: 344px;
    height: 3px;
    background: #fff;
}

/* menus */
.menu{
    position: absolute;
    display: flex;
    flex-direction: column;
    padding: 2px;
    background: #f0f0f0;
    border: 1px solid #a0a0a0;
    box-shadow: 3px 3px 4px rgba(0,0,0,.5);
    color: #000;
}
.menu.edit{
    left: 72px;
    top: 22px;
    width: 254px;
}
.menu.sub{
    left: 320px;
    top: 623px;
    width: 160px;
}
.menu button{
    display: flex;
    align-items: center;
    height: 19px;
    padding: 0 15px 0 17px;
}
.menu button:disabled{
    color: #6d6d6d;
}
.menu .on{
    background: #0078d7;
    color: #fff;
}
.menu kbd{
    margin-left: auto;
    font: inherit;
}
.menu svg{
    width: 8px;
    height: 8px;
    margin: 0 -10px 0 auto;
}
.menu hr{
    height: 1px;
    margin: 5px 0;
    border: 0;
    background: #b9b9b9;
}

/* presets dialog */
.dialog{
    position: absolute;
    display: flex;
    flex-direction: column;
    width: 756px;
    background: #535353;
    border: 1px solid #4fa3cc;
    font-size: 10px;
    color: #dcdcdc;
    box-shadow: 4px 6px 14px rgba(0,0,0,.4);
}
.first{
    left: 486px;
    top: 71px;
}
.second{
    left: 574px;
    top: 149px;
}
.dialog h2{
    height: 30px;
    padding-left: 8px;
    line-height: 30px;
    background: #fff;
    color: #000;
}
.sheet{
    height: 571px;
    margin: 15px 15px 16px;
    border: 1px solid #3b3b3b;
}
.tabs{
    display: flex;
    height: 28px;
    background: #424242;
    border-bottom: 1px solid #3b3b3b;
}
.tabs button{
    width: 104px;
    padding: 2px 2px 0 0;
    color: #999;
    border-right: 1px solid #3b3b3b;
}
.tabs .on{
    height: 28px;
    background: #535353;
    color: #fff;
}
.lists{
    display: flex;
    padding: 13px 16px 0;
}
.col{
    width: 300px;
}
.col p{
    height: 28px;
}
.col + .move + .col p{
    padding-left: 10px;
}
.move{
    display: flex;
    flex-direction: column;
    align-items: center;
    gap: 10px;
    width: 50px;
    padding-top: 198px;
}
.move .btn{
    width: 30px;
}
.list{
    height: 400px;
    background: #4d4d4d;
    border: 1px solid #3e3e3e;
}
.full{
    display: grid;
    grid-template: 1fr 16px/1fr 16px;
}
.full ul{
    min-width: 0;
    min-height: 0;
    overflow: hidden;
    padding: 1px 0 0 2px;
    line-height: 15px;
}
.full li{
    white-space: pre;
}
.vbar,.hbar{
    display: flex;
    align-items: center;
    background: #494949;
}
.vbar{
    flex-direction: column;
    padding: 3px 0 1px;
}
.vbar span{
    width: 16px;
    height: 161px;
    margin: 2px 0 auto;
    border-radius: 2px;
    background: #686868;
}
.hbar{
    padding: 0 2px;
}
.hbar span{
    width: 232px;
    height: 16px;
    margin: 0 auto 0 2px;
    border-radius: 2px;
    background: #686868;
}
.vbar i,.hbar i{
    border: 6px solid transparent;
}
.vbar .t-up{
    border-top: 0;
    border-bottom: 12px solid #ccc;
}
.vbar .t-down{
    border-bottom: 0;
    border-top: 12px solid #ccc;
}
.hbar .t-left{
    border-left: 0;
    border-right: 12px solid #ccc;
}
.hbar .t-right{
    border-right: 0;
    border-left: 12px solid #ccc;
}
.count{
    padding: 15px 16px 0;
}
.actions{
    display: flex;
    justify-content: flex-end;
    gap: 10px;
    padding: 13px 46px 0 0;
}
.actions .btn{
    padding: 0 21px;
    color: #e6e6e6;
}
.pill{
    align-self: flex-end;
    width: 64px;
    height: 24px;
    margin: 0 19px 15px;
    border: 1px solid #808080;
    border-radius: 12px;
}
/* red call-out boxes */
.marked{
    position: relative;
}
.marked::after{
    content: "";
    position: absolute;
    border: 4px solid #f00000;
    border-radius: 2px;
}
.folder-mark::after{
    inset: -13px -6px -17px -18px;
}
.ok-mark::after{
    inset: -8px -10px -10px -20px;
}

/* choose folder window */
.chooser{
    position: absolute;
    left: 692px;
    top: 177px;
    display: flex;
    flex-direction: column;
    width: 1100px;
    background: #fff;
    border: 1px solid #4fa3cc;
    color: #111;
}
.chooser button{
    display: flex;
    align-items: center;
    justify-content: center;
}
.ctitle{
    display: flex;
    align-items: center;
    justify-content: space-between;
    height: 35px;
    padding: 0 9px 6px 8px;
}
.ctitle svg{
    width: 12px;
    height: 12px;
}
.ctitle .ln,.tw .ln{
    stroke-width: 1;
}
.cnav{
    display: flex;
    height: 24px;
    margin: 0 12px 6px;
    color: #777;
}
.cnav > button svg{
    width: 14px;
    height: 14px;
}
.cnav > button{
    margin-right: 16px;
}
.cnav > .faint{
    color: #ccc;
}
.flip svg{
    transform: rotate(180deg);
}
.cnav > .small{
    margin: 0 9px 0 -6px;
}
.cnav > .small svg{
    width: 10px;
    height: 10px;
}
.cnav > .small + button{
    margin-right: 8px;
}
.address{
    display: flex;
    flex: 1;
    align-items: center;
    padding-left: 3px;
    border: 1px solid #d9d9d9;
    color: #111;
}
.fold{
    width: 14px;
    height: 16px;
}
.gt{
    width: 8px;
    height: 8px;
    margin: 0 8px;
    color: #777;
}
.hist{
    width: 20px;
    margin-left: auto;
    color: #666;
}
.hist svg{
    width: 12px;
    height: 12px;
}
.refresh{
    width: 20px;
    height: 22px;
    border-left: 1px solid #d9d9d9;
    color: #666;
}
.refresh svg{
    width: 14px;
    height: 14px;
}
.find{
    display: flex;
    align-items: center;
    width: 202px;
    margin-left: 12px;
    padding: 0 7px;
    border: 1px solid #d9d9d9;
}
.find input{
    flex: 1;
    min-width: 0;
}
.find input::placeholder{
    color: #6d6d6d;
}
.find svg{
    width: 14px;
    height: 14px;
}
.ctools{
    display: flex;
    align-items: center;
    gap: 30px;
    height: 31px;
    padding: 0 15px 0 18px;
    background: #f5f6f7;
    border-bottom: 1px solid #e4e5e6;
    color: #1e395b;
}
.ctools button{
    gap: 6px;
}
.ctools svg{
    width: 8px;
    height: 8px;
}
.ctools .views{
    width: 18px;
    height: 14px;
}
.ctools .view{
    gap: 9px;
    margin-left: auto;
}
.ctools .help{
    width: 16px;
    height: 16px;
    border-radius: 50%;
    background: #0063b1;
    color: #fff;
    font-weight: 700;
}
.cbody{
    display: flex;
    height: 241px;
}
.treewrap{
    display: flex;
    width: 304px;
    border-right: 1px solid #eee;
}
.tree{
    flex: 1;
}
.tree li{
    display: flex;
    align-items: center;
    height: 24px;
    padding-left: 61px;
    border: 1px solid transparent;
}
.tree .root{
    padding-left: 52px;
}
.tree .sel{
    background: #cce8ff;
    border-color: #99d1ff;
}
.sel::after{
    inset: -6px -6px -7px 29px;
}
.tw{
    width: 10px;
    height: 10px;
    margin-right: 10px;
    color: #888;
}
.root .tw{
    width: 12px;
    height: 12px;
    margin-right: 9px;
    color: #333;
}
.tree .fold{
    margin-right: 5px;
}
.files .fold{
    margin-right: 4px;
}
.tscroll{
    display: flex;
    flex-direction: column;
    align-items: center;
    width: 16px;
    margin-right: 3px;
    padding: 3px 0;
    background: #f0f0f0;
    color: #444;
}
.tscroll svg{
    width: 12px;
    height: 12px;
}
.tscroll .rot{
    transform: rotate(180deg);
}
.tscroll i{
    width: 16px;
    height: 17px;
    margin: 66px 0 auto;
    background: #cdcdcd;
}
.files{
    flex: 1;
}
table{
    width: 100%;
    table-layout: fixed;
    border-collapse: collapse;
    color: #6d6d6d;
}
th{
    position: relative;
    height: 25px;
    padding-left: 6px;
    border-right: 1px solid #e5e5e5;
    font-weight: normal;
    text-align: left;
    color: #4c607a;
}
th:last-child{
    border: 0;
}
.c-name{
    width: 272px;
    padding-left: 18px;
}
.c-date,.c-type{
    width: 120px;
}
.c-size{
    width: 80px;
}
.sort{
    position: absolute;
    left: 50%;
    top: -1px;
    width: 10px;
    height: 8px;
    transform: rotate(180deg);
}
td{
    height: 21px;
    padding-left: 6px;
    white-space: nowrap;
}
td:first-child{
    padding-left: 21px;
    color: #111;
}
td .fold{
    display: inline-block;
    vertical-align: middle;
}
tbody::before{
    content: "";
    display: block;
    height: 6px;
}
.cfoot{
    position: relative;
    height: 75px;
    padding: 9px 17px;
    background: #f0f0f0;
}
.frow{
    display: flex;
    align-items: center;
    gap: 6px;
    padding-left: 113px;
}
.frow input{
    flex: 1;
    height: 23px;
    border: 1px solid #7a7a7a;
    background: #fff;
}
.fbtns{
    display: flex;
    justify-content: flex-end;
    gap: 14px;
    padding: 6px 1px 0 0;
}
.fbtns button{
    width: 86px;
    height: 24px;
    border: 1px solid #adadad;
    background: #e1e1e1;
}
.fbtns .ok{
    border: 2px solid #0078d7;
}
.resize{
    position: absolute;
    right: 2px;
    bottom: 2px;
    width: 9px;
    height: 9px;
    background: repeating-conic-gradient(#bbb 0 25%, #f0f0f0 0 50%) 0 0/4px 4px;
    clip-path: polygon(100% 0, 100% 100%, 0 100%);
}
```
